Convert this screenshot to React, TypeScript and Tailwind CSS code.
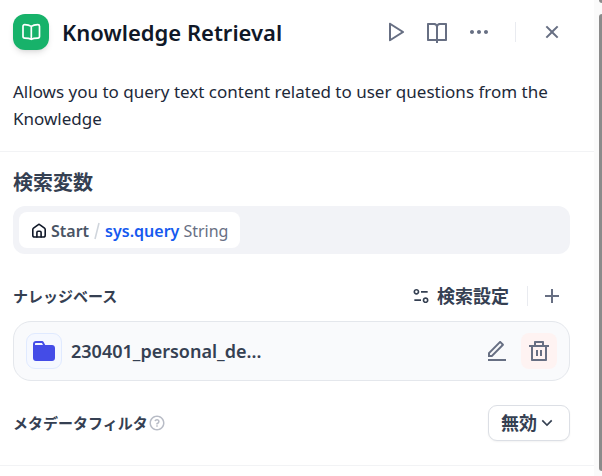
import type { ReactNode } from "react";
import {
    RiAddLine,
    RiArrowDownSLine,
    RiBookOpenLine,
    RiCloseLine,
    RiDeleteBinLine,
    RiEditLine,
    RiEqualizer2Line,
    RiMoreFill,
    RiPlayLargeLine,
    RiQuestionLine,
} from "react-icons/ri";

type IconButtonProps = {
    label: string;
    className?: string;
    children: ReactNode;
}

const IconButton = ({ label, className = "", children }: IconButtonProps) => {
    return (
        <button aria-label={label} className={"flex size-9 shrink-0 items-center justify-center rounded-lg text-[#676f83] " + className}>
            {children}
        </button>
    );
}

const KnowledgeIcon = () => {
    return (
        <div className="flex size-9 shrink-0 items-center justify-center rounded-xl bg-[#17b26a] text-white shadow-md shadow-black/10">
            <svg width="20" height="18" viewBox="0 0 20 18" fill="none" stroke="currentColor" strokeWidth="1.7" strokeLinejoin="round" strokeLinecap="round">
                <path d="M10.300 3.400C8.400 2.200 6.500 1.700 3.700 1.700C2.700 1.700 2 2.300 2 3.200V13.600C2 14.600 2.700 15.200 3.700 15.200C6.500 15.200 8.700 15.400 10.300 16.400C11.900 15.400 14 15.200 16.800 15.200C17.800 15.200 18.500 14.600 18.500 13.600V3.200C18.500 2.300 17.800 1.700 16.800 1.700C14 1.700 11.900 2.200 10.300 3.400ZM10.300 3.400V16" />
            </svg>
        </div>
    );
}

const HomeIcon = () => {
    return (
        <svg width="16" height="16" viewBox="0 0 16 16" fill="none" stroke="currentColor" strokeWidth="1.6" strokeLinejoin="round" strokeLinecap="round" className="shrink-0 text-[#101828]">
            <path d="M1.800 6.600C1.800 6 2 5.600 2.500 5.200L7 1.800C7.600 1.300 8.400 1.300 9 1.800L13.500 5.200C14 5.600 14.200 6 14.200 6.600V12.200C14.200 13.300 13.500 14 12.400 14H3.600C2.500 14 1.800 13.300 1.800 12.200Z" />
            <path d="M5.900 14V9.400C5.900 8.700 6.300 8.300 7 8.300H9C9.700 8.300 10.100 8.700 10.100 9.400V14" />
        </svg>
    );
}

const FolderIcon = () => {
    return (
        <svg width="24" height="22" viewBox="0 0 24 22" className="text-[#444ce7]">
            <path fillRule="evenodd" fill="currentColor" d="M1 4C1 2.300 2.300 1 4 1H9.500C10.600 1 11.400 1.500 11.900 2.400L13.200 5H20C21.700 5 23 6.300 23 8V18C23 19.700 21.700 21 20 21H4C2.300 21 1 19.700 1 18ZM3 5H11L10.200 3.500C10 3.100 9.700 3 9.400 3H4C3.400 3 3 3.400 3 4Z" />
        </svg>
    );
}

const Header = () => {
    return (
        <header className="border-b border-[#f2f3f5] pt-3 pr-6 pb-[19px] pl-[13px]">
            <div className="flex h-10 items-center">
                <KnowledgeIcon />
                <h1 className="ml-[13px] flex-1 truncate text-[22px] font-semibold text-[#101828]">Knowledge Retrieval</h1>
                <div className="flex items-center gap-[6px]">
                    <IconButton label="Run"><RiPlayLargeLine size={24} /></IconButton>
                    <IconButton label="Help"><RiBookOpenLine size={24} /></IconButton>
                    <IconButton label="More"><RiMoreFill size={24} /></IconButton>
                </div>
                <div className="mx-[18px] h-5 w-px bg-[#e9ebf0]" />
                <IconButton label="Close"><RiCloseLine size={24} /></IconButton>
            </div>
            <p className="mt-[26px] text-[17px] leading-[27px] text-[#1d2939]">
                Allows you to query text content related to user questions from the Knowledge
            </p>
        </header>
    );
}

const QueryVariable = () => {
    return (
        <section>
            <h2 className="text-[20px] leading-[30px] font-semibold">検索変数</h2>
            <div className="mt-2 flex h-12 items-center rounded-xl bg-[#f2f3f7] px-[6px]">
                <button className="flex h-9 items-center rounded-lg bg-white px-3 pt-[2px] text-[16px]">
                    <HomeIcon />
                    <span className="ml-1 font-semibold text-[#495464]">Start</span>
                    <svg width="8" height="18" viewBox="0 0 8 18" className="mx-1 text-[#d0d5dc]">
                        <path d="M2 17L6 1" stroke="currentColor" strokeWidth="1.500" />
                    </svg>
                    <span className="font-semibold text-[#155aef]">sys.query</span>
                    <span className="ml-1 text-[#676f83]">String</span>
                </button>
            </div>
        </section>
    );
}

const KnowledgeBase = () => {
    return (
        <section className="mt-6">
            <div className="flex h-9 items-center justify-between">
                <h2 className="text-[15px] font-semibold">ナレッジベース</h2>
                <div className="flex items-center">
                    <button className="flex items-center gap-[6px] text-[18px] font-semibold">
                        <RiEqualizer2Line size={20} />
                        検索設定
                    </button>
                    <div className="ml-[18px] h-5 w-px bg-[#e9ebf0]" />
                    <IconButton label="Add knowledge" className="ml-[6px]"><RiAddLine size={24} /></IconButton>
                </div>
            </div>
            <div className="mt-[7px] flex h-[60px] items-center rounded-[18px] border border-[#e4e7ec] bg-[#f9fafc] px-3">
                <div className="flex size-9 shrink-0 items-center justify-center rounded-[9px] border border-[#e0eaff] bg-[#f5f8ff]">
                    <FolderIcon />
                </div>
                <span className="ml-[9px] flex-1 truncate text-[18px] font-semibold">230401_personal_de...</span>
                <IconButton label="Edit"><RiEditLine size={24} /></IconButton>
                <IconButton label="Delete" className="ml-[6px] bg-[#fef3f2]"><RiDeleteBinLine size={24} /></IconButton>
            </div>
        </section>
    );
}

const MetadataFilter = () => {
    return (
        <section className="mt-6 flex h-9 items-center justify-between">
            <div className="flex items-center">
                <h2 className="text-[15px] font-semibold">メタデータフィルタ</h2>
                <RiQuestionLine size={18} className="text-[#b8bcc6]" />
            </div>
            <button className="flex h-9 items-center rounded-[9px] border border-[#dcdfe5] bg-white px-3 text-[18px] font-semibold shadow-xs">
                無効
                <RiArrowDownSLine size={20} />
            </button>
        </section>
    );
}

const ScrollTrack = () => {
    return (
        <div className="flex w-2 shrink-0 flex-col items-end overflow-hidden bg-[#fafafa]">
            <div className="h-[3px] w-[3px] rounded-bl-full bg-[#8b8b8b]" />
            <div className="mt-[11px] mb-[5px] w-[3px] flex-1 rounded-l-full bg-[#8b8b8b]" />
        </div>
    );
}

export default function App() {
    return (
        <div className="flex min-h-screen bg-white font-['Noto_Sans','Noto_Sans_CJK_JP',sans-serif] text-[#354052]">
            <main className="min-w-0 flex-1">
                <Header />
                <div className="border-b border-[#f2f3f5] pt-4 pr-6 pb-6 pl-[13px]">
                    <QueryVariable />
                    <KnowledgeBase />
                    <MetadataFilter />
                </div>
            </main>
            <ScrollTrack />
        </div>
    );
}
